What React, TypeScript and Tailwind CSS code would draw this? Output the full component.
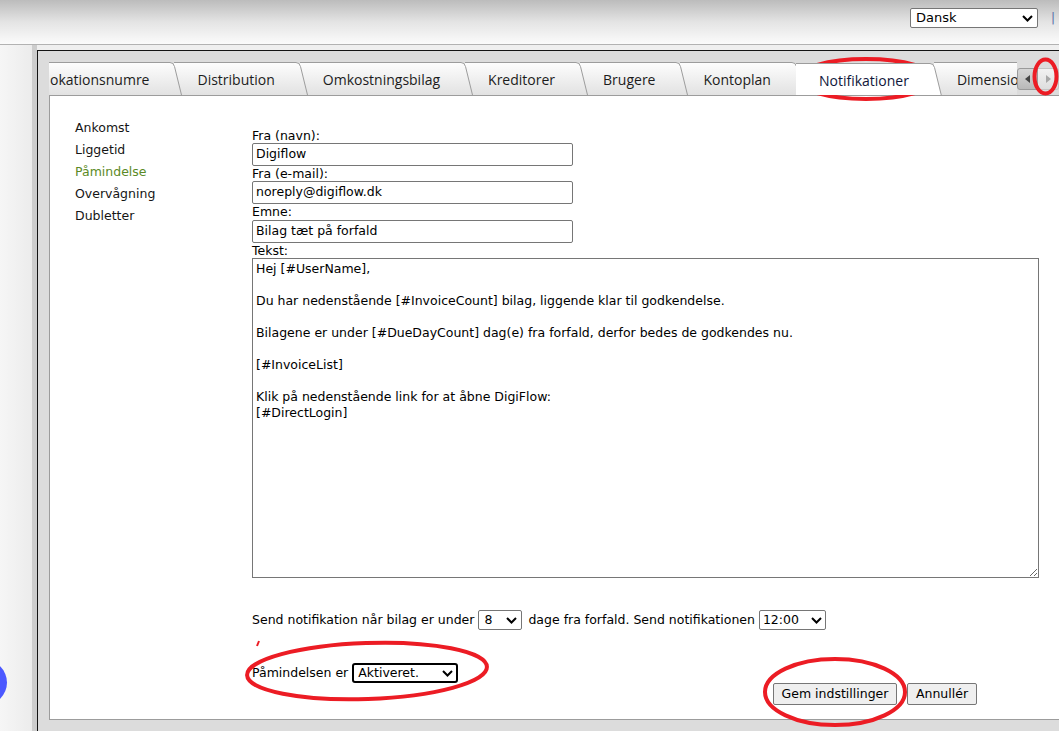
import React from 'react';

const tabs = [
  'okationsnumre',
  'Distribution',
  'Omkostningsbilag',
  'Kreditorer',
  'Brugere',
  'Kontoplan',
  'Notifikationer',
  'Dimensioner',
];

const navItems = ['Ankomst', 'Liggetid', 'Påmindelse', 'Overvågning', 'Dubletter'];

const mailText = `Hej [#UserName],

Du har nedenstående [#InvoiceCount] bilag, liggende klar til godkendelse.

Bilagene er under [#DueDayCount] dag(e) fra forfald, derfor bedes de godkendes nu.

[#InvoiceList]

Klik på nedenstående link for at åbne DigiFlow:
[#DirectLogin]`;

function Chevron() {
  return (
    <svg width="11" height="7" viewBox="0 0 11 7" className="shrink-0">
      <path d="M1 1 L5.5 5.5 L10 1" fill="none" stroke="#000" strokeWidth="2" />
    </svg>
  );
}

function Select({ value, className }: { value: string; className: string }) {
  return (
    <div className={`flex items-center justify-between bg-white ${className}`}>
      <span>{value}</span>
      <Chevron />
    </div>
  );
}

function Tab({ label, index, active }: { label: string; index: number; active: boolean }) {
  const gid = `tabfill-${index}`;
  return (
    <div
      className={`relative flex h-[33px] shrink-0 -mr-[8px] ${active ? 'translate-y-[1px]' : ''}`}
      style={{ zIndex: active ? 50 : 20 - index }}
    >
      <div
        className={`flex h-full items-center border-t border-[#9c9c9c] pr-[16px] ${
          index === 0 ? 'pl-[1px]' : 'pl-[23px]'
        } ${active ? 'bg-white text-[#10163a]' : 'bg-gradient-to-b from-[#fdfdfd] to-[#e2e2e2] text-[#1c1c1c]'}`}
      >
        <span className="whitespace-nowrap">{label}</span>
      </div>
      <svg width="17" height="33" viewBox="0 0 17 33" className="block shrink-0">
        <defs>
          <linearGradient id={gid} x1="0" y1="0" x2="0" y2="1">
            <stop offset="0" stopColor={active ? '#ffffff' : '#fdfdfd'} />
            <stop offset="1" stopColor={active ? '#ffffff' : '#e2e2e2'} />
          </linearGradient>
        </defs>
        <path d="M0 0.5 H5 Q8.5 0.5 9.5 4.5 L16.5 33 H0 Z" fill={`url(#${gid})`} />
        <path d="M0 0.5 H5 Q8.5 0.5 9.5 4.5 L16.5 33" fill="none" stroke="#9c9c9c" />
      </svg>
    </div>
  );
}

export default function App() {
  return (
    <div className="relative flex h-screen w-full flex-col overflow-hidden bg-white font-['DejaVu_Sans',sans-serif] text-[12.5px] text-black">
      {/* top bar */}
      <div className="flex h-[45px] shrink-0 items-start justify-end border-b border-[#b2b2b2] bg-gradient-to-b from-[#bcbcbc] via-[#e4e4e4] to-[#fbfbfb] pr-[5px] pt-[8px]">
        <Select
          value="Dansk"
          className="h-[20px] w-[128px] rounded-[2px] border border-[#767676] pl-[5px] pr-[4px] text-[13px]"
        />
        <span className="ml-[13px] mt-[3px] w-[3px] text-[12px] leading-[14px] text-[#5470a8]">|</span>
      </div>

      <div className="flex min-h-0 flex-1">
        {/* left rail */}
        <div className="relative w-[32px] shrink-0 bg-gradient-to-r from-[#f6f6f6] to-[#ececec]">
          <div className="absolute left-[-38px] top-[615px] h-[45px] w-[45px] rounded-full bg-[#4b58ff]" />
        </div>
        <div className="w-[5px] shrink-0 bg-[#cdcdcd]" />

        <div className="flex min-w-0 flex-1 flex-col bg-[#efefef] pt-[5px]">
          <div className="flex min-h-0 flex-1 flex-col border-l border-t border-[#141414] bg-[#dcdcdc] pb-[11px] pl-[11px]">
            {/* tab strip */}
            <div className="flex h-[44px] shrink-0 items-end">
              <div className="flex min-w-0 flex-1 items-end overflow-hidden font-['Open_Sans',sans-serif] text-[14px]">
                {tabs.map((t, i) => (
                  <Tab key={t} label={t} index={i} active={t === 'Notifikationer'} />
                ))}
              </div>
              <div className="mb-[5px] flex h-[22px] shrink-0">
                <div className="flex w-[21px] items-center justify-center rounded-l-[3px] border border-[#9a9a9a] bg-gradient-to-b from-[#d6d6d6] to-[#b9b9b9]">
                  <svg width="5" height="8" viewBox="0 0 5 8">
                    <path d="M5 0 L0 4 L5 8 Z" fill="#444" />
                  </svg>
                </div>
                <div className="flex w-[21px] items-center justify-center rounded-r-[3px] border border-l-0 border-[#c4c4c4] bg-gradient-to-b from-[#f2f2f2] to-[#dedede]">
                  <svg width="5" height="8" viewBox="0 0 5 8">
                    <path d="M0 0 L5 4 L0 8 Z" fill="#a8a8a8" />
                  </svg>
                </div>
              </div>
            </div>

            {/* panel */}
            <div className="flex min-h-0 flex-1 border-b border-l border-t border-[#9c9c9c] bg-white pl-[25px]">
              <div className="w-[177px] shrink-0 pt-[21px]">
                {navItems.map((n) => (
                  <div
                    key={n}
                    className={`h-[22px] leading-[22px] ${n === 'Påmindelse' ? 'text-[#5b8a26]' : 'text-[#151515]'}`}
                  >
                    {n}
                  </div>
                ))}
              </div>

              <div className="flex flex-col pt-[32px]">
                <div className="h-[15px] leading-[15px]">Fra (navn):</div>
                <div className="flex h-[23px] w-[321px] items-center rounded-[2px] border border-[#767676] px-[3px]">
                  Digiflow
                </div>
                <div className="h-[15px] leading-[15px]">Fra (e-mail):</div>
                <div className="flex h-[23px] w-[321px] items-center rounded-[2px] border border-[#767676] px-[3px]">
                  noreply@digiflow.dk
                </div>
                <div className="h-[16px] leading-[16px]">Emne:</div>
                <div className="flex h-[23px] w-[321px] items-center rounded-[2px] border border-[#767676] px-[3px]">
                  Bilag tæt på forfald
                </div>
                <div className="h-[15px] leading-[15px]">Tekst:</div>
                <textarea
                  className="h-[320px] w-[787px] border border-[#767676] px-[3px] py-[2px] leading-[16px] outline-none"
                  defaultValue={mailText}
                />

                <div className="mt-[32px] flex h-[20px] items-center whitespace-nowrap">
                  <span>Send notifikation når bilag er under</span>
                  <Select
                    value="8"
                    className="ml-[4px] h-[20px] w-[44px] rounded-[2px] border border-[#767676] pl-[5px] pr-[4px]"
                  />
                  <span className="ml-[6px]">dage fra forfald. Send notifikationen</span>
                  <Select
                    value="12:00"
                    className="ml-[4px] h-[20px] w-[67px] rounded-[2px] border border-[#767676] pl-[3px] pr-[3px]"
                  />
                </div>

                <div className="mt-[33px] flex h-[20px] items-center whitespace-nowrap">
                  <span>Påmindelsen er</span>
                  <Select
                    value="Aktiveret."
                    className="ml-[4px] h-[20px] w-[106px] rounded-[3px] border-2 border-black pl-[4px] pr-[3px]"
                  />
                </div>

                <div className="ml-[521px] flex">
                  <button className="flex h-[22px] w-[124px] items-center justify-center rounded-[2px] border border-[#767676] bg-[#efefef]">
                    Gem indstillinger
                  </button>
                  <button className="ml-[10px] flex h-[22px] w-[70px] items-center justify-center rounded-[2px] border border-[#767676] bg-[#efefef]">
                    Annullér
                  </button>
                </div>
              </div>
            </div>
          </div>
        </div>
      </div>

      {/* red annotation marks */}
      <svg className="pointer-events-none absolute inset-0" width="1059" height="731" viewBox="0 0 1059 731">
        <g fill="none" stroke="#ec1c24" strokeWidth="4">
          <ellipse cx="866" cy="79" rx="69" ry="20" />
          <ellipse cx="1045.5" cy="76.5" rx="11" ry="17" />
          <ellipse cx="367" cy="671" rx="120" ry="28" transform="rotate(-2 367 671)" />
          <ellipse cx="835" cy="692" rx="70" ry="33" />
          <path d="M257 646 L259 641" strokeWidth="2" />
        </g>
      </svg>
    </div>
  );
}
